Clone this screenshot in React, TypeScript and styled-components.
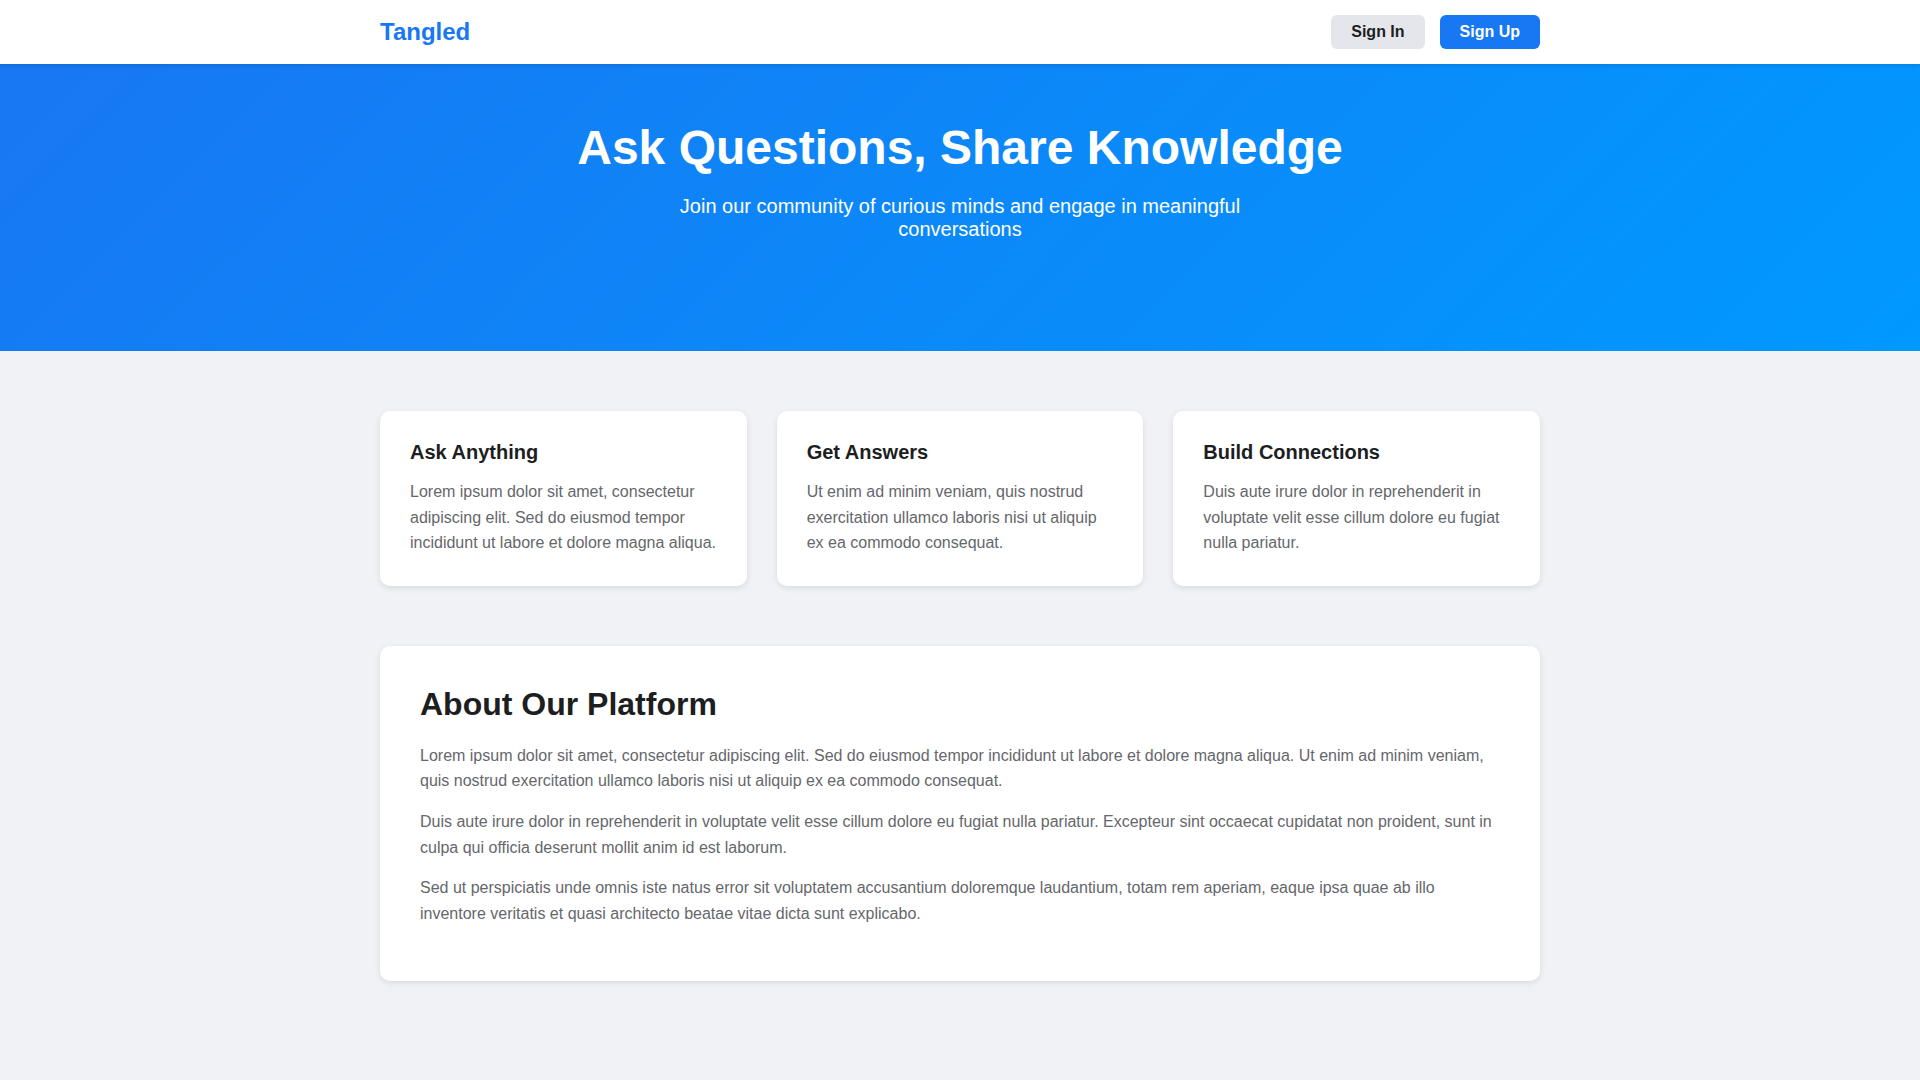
import React from "react";
import styled, { createGlobalStyle } from "styled-components";

const GlobalStyle = createGlobalStyle`
  * { box-sizing: border-box; }
  html, body { margin: 0; padding: 0; }
  body {
    background: #f0f2f5;
    font-family: "Liberation Sans", Arial, Helvetica, sans-serif;
    color: #1c1e21;
  }
`;

const Header = styled.header`
  position: relative;
  z-index: 2;
  height: 64px;
  background: #ffffff;
  box-shadow: 0 2px 4px rgba(0, 0, 0, 0.1);
`;

const Container = styled.div`
  max-width: 1200px;
  margin: 0 auto;
  padding: 0 20px;
`;

const HeaderInner = styled(Container)`
  height: 100%;
  display: flex;
  align-items: center;
  justify-content: space-between;
`;

const Logo = styled.div`
  font-size: 24px;
  font-weight: 700;
  color: #1877f2;
`;

const Actions = styled.div`
  display: flex;
  gap: 15px;
`;

const Button = styled.button<{ $primary?: boolean }>`
  font-family: inherit;
  font-size: 16px;
  font-weight: 700;
  line-height: 18px;
  padding: 8px 20px;
  border: none;
  border-radius: 6px;
  cursor: pointer;
  background: ${(p) => (p.$primary ? "#1877f2" : "#e4e6eb")};
  color: ${(p) => (p.$primary ? "#ffffff" : "#1c1e21")};
`;

const Hero = styled.section`
  background: linear-gradient(135deg, #1877f2 0%, #0099ff 100%);
  color: #ffffff;
  text-align: center;
  padding: 56px 20px 110px;
`;

const HeroTitle = styled.h1`
  margin: 0 0 20px;
  font-size: 48px;
  font-weight: 700;
`;

const HeroText = styled.p`
  margin: 0 auto;
  max-width: 600px;
  font-size: 20px;
  line-height: 23px;
`;

const Main = styled(Container)`
  padding-top: 60px;
  padding-bottom: 100px;
`;

const Features = styled.div`
  display: grid;
  grid-template-columns: repeat(3, 1fr);
  gap: 30px;
  margin-bottom: 60px;
`;

const Card = styled.div`
  background: #ffffff;
  border-radius: 10px;
  box-shadow: 0 2px 6px rgba(0, 0, 0, 0.1);
`;

const FeatureCard = styled(Card)`
  padding: 30px;
`;

const FeatureTitle = styled.h3`
  margin: 0 0 15px;
  font-size: 20px;
  font-weight: 700;
  color: #1c1e21;
`;

const Text = styled.p`
  margin: 0;
  font-size: 16px;
  line-height: 1.6;
  color: #65676b;
`;

const AboutCard = styled(Card)`
  padding: 40px;
`;

const AboutTitle = styled.h2`
  margin: 0 0 20px;
  font-size: 32px;
  font-weight: 700;
  color: #1c1e21;
`;

const AboutText = styled(Text)`
  margin-bottom: 15px;
`;

const features = [
  {
    title: "Ask Anything",
    text: "Lorem ipsum dolor sit amet, consectetur adipiscing elit. Sed do eiusmod tempor incididunt ut labore et dolore magna aliqua.",
  },
  {
    title: "Get Answers",
    text: "Ut enim ad minim veniam, quis nostrud exercitation ullamco laboris nisi ut aliquip ex ea commodo consequat.",
  },
  {
    title: "Build Connections",
    text: "Duis aute irure dolor in reprehenderit in voluptate velit esse cillum dolore eu fugiat nulla pariatur.",
  },
];

const about = [
  "Lorem ipsum dolor sit amet, consectetur adipiscing elit. Sed do eiusmod tempor incididunt ut labore et dolore magna aliqua. Ut enim ad minim veniam, quis nostrud exercitation ullamco laboris nisi ut aliquip ex ea commodo consequat.",
  "Duis aute irure dolor in reprehenderit in voluptate velit esse cillum dolore eu fugiat nulla pariatur. Excepteur sint occaecat cupidatat non proident, sunt in culpa qui officia deserunt mollit anim id est laborum.",
  "Sed ut perspiciatis unde omnis iste natus error sit voluptatem accusantium doloremque laudantium, totam rem aperiam, eaque ipsa quae ab illo inventore veritatis et quasi architecto beatae vitae dicta sunt explicabo.",
];

export default function App() {
  return (
    <>
      <GlobalStyle />
      <Header>
        <HeaderInner>
          <Logo>Tangled</Logo>
          <Actions>
            <Button>Sign In</Button>
            <Button $primary>Sign Up</Button>
          </Actions>
        </HeaderInner>
      </Header>
      <Hero>
        <HeroTitle>Ask Questions, Share Knowledge</HeroTitle>
        <HeroText>
          Join our community of curious minds and engage in meaningful conversations
        </HeroText>
      </Hero>
      <Main>
        <Features>
          {features.map((f) => (
            <FeatureCard key={f.title}>
              <FeatureTitle>{f.title}</FeatureTitle>
              <Text>{f.text}</Text>
            </FeatureCard>
          ))}
        </Features>
        <AboutCard>
          <AboutTitle>About Our Platform</AboutTitle>
          {about.map((t, i) => (
            <AboutText key={i}>{t}</AboutText>
          ))}
        </AboutCard>
      </Main>
    </>
  );
}
